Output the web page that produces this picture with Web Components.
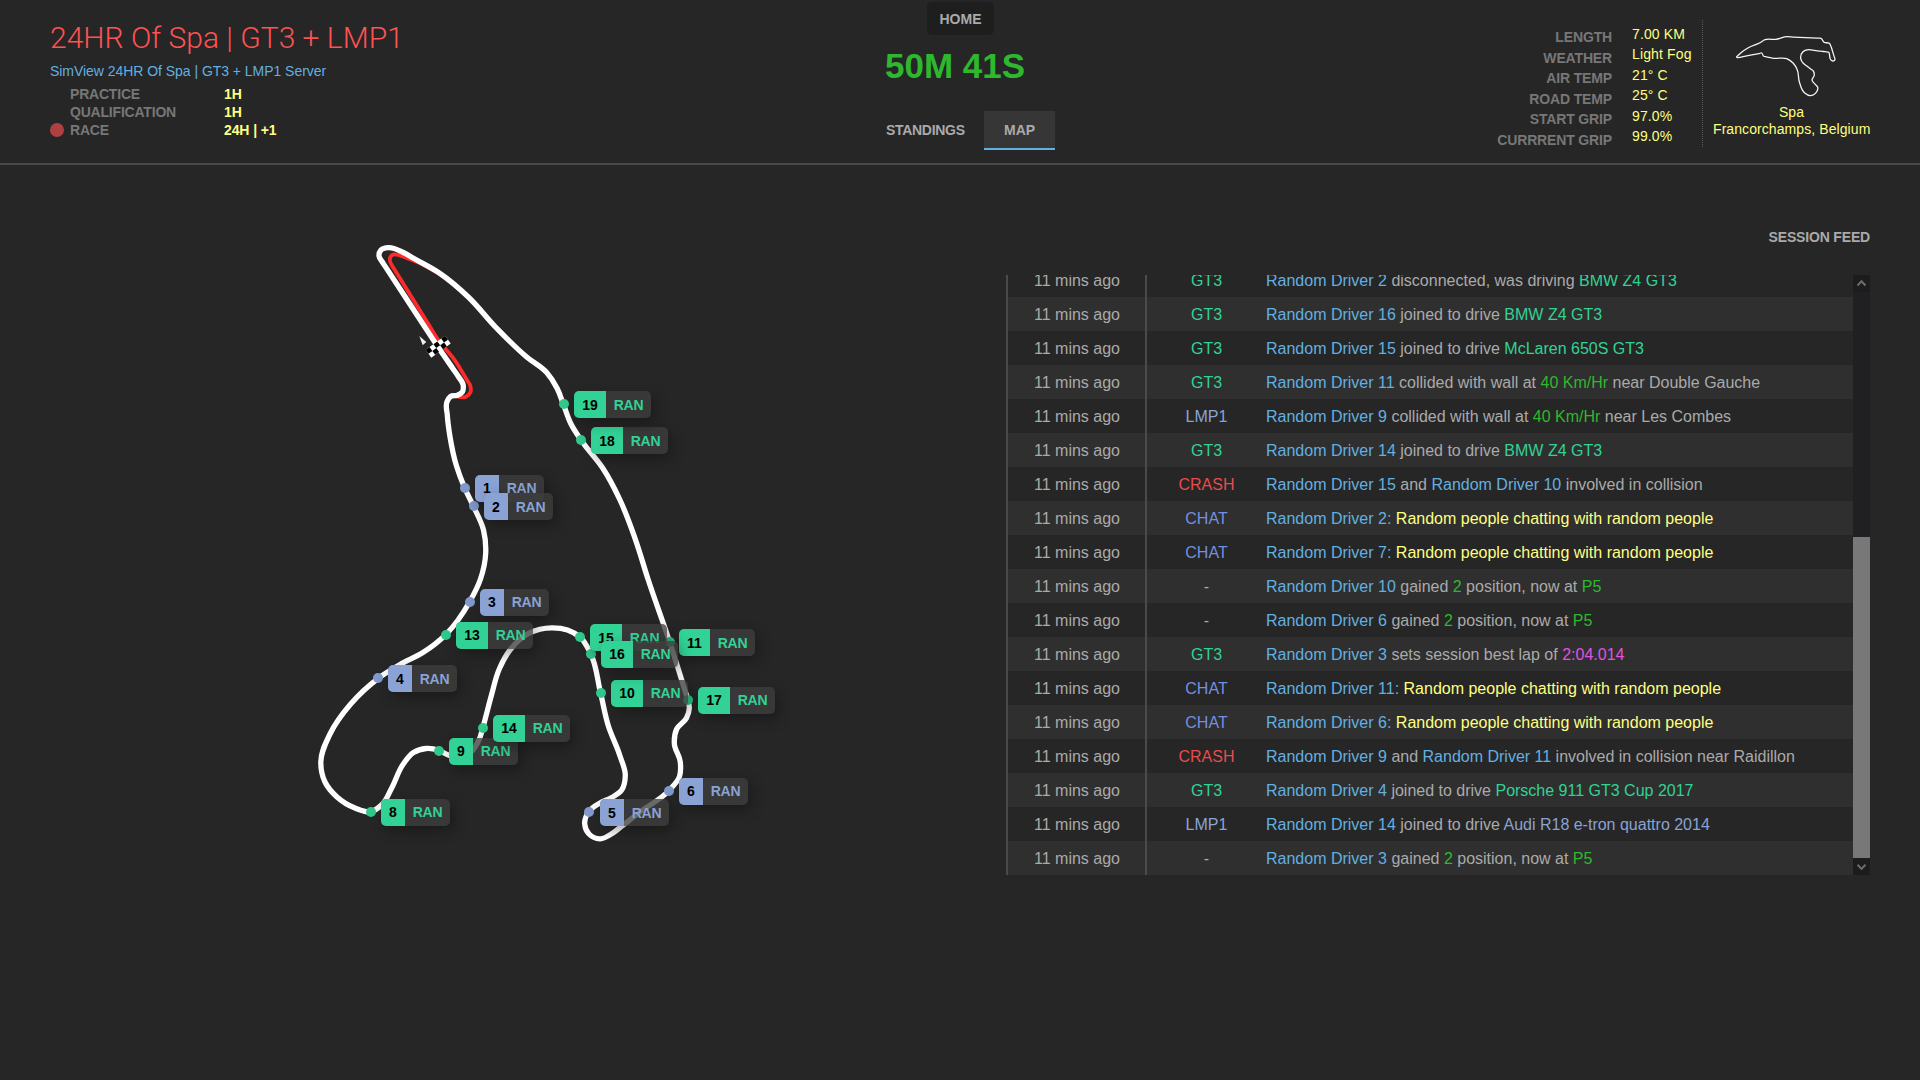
<!DOCTYPE html>
<html lang="en">
<head>
<meta charset="utf-8">
<title>SimView - Live Map</title>
<style>
html,body{margin:0;height:100%;background:#262626;overflow:hidden}
body{font-family:"Liberation Sans",Arial,sans-serif;font-size:14px;color:#aaa}
</style>
</head>
<body>
<sim-app></sim-app>
<script>
const define = (name, markup, setup) => {
  const tpl = document.createElement('template');
  tpl.innerHTML = markup;
  customElements.define(name, class extends HTMLElement {
    connectedCallback() {
      if (this.shadowRoot) return;
      this.attachShadow({mode: 'open'}).append(tpl.content.cloneNode(true));
      if (setup) setup(this, this.shadowRoot);
    }
  });
};

/* Smooth curve through a list of [x,y] points, with chord-length weighted tangents.
   A segment much longer than its neighbour is a straight: it gets an extra point near that end. */
function smooth(raw, closed) {
  const dist = (u, v) => Math.hypot(u[0] - v[0], u[1] - v[1]);
  const picker = q => i => closed ? q[(i + q.length) % q.length] : q[Math.max(0, Math.min(q.length - 1, i))];
  const src = picker(raw), p = [];
  raw.forEach((b, i) => {
    p.push(b);
    if (!closed && i === raw.length - 1) return;
    const c = src(i + 1), l = dist(b, c), la = dist(src(i - 1), b), lb = dist(c, src(i + 2));
    const mix = t => [+(b[0] + (c[0] - b[0]) * t).toFixed(2), +(b[1] + (c[1] - b[1]) * t).toFixed(2)];
    if (la && l > 2.2 * la) p.push(mix(la * .7 / l));
    if (lb && l > 2.2 * lb) p.push(mix(1 - lb * .7 / l));
  });
  const n = p.length, at = picker(p);
  const tangent = i => {
    const a = at(i - 1), b = at(i), c = at(i + 1), la = dist(a, b), lb = dist(b, c);
    return [0, 1].map(k => {
      if (!la) return (c[k] - b[k]) / lb;
      if (!lb) return (b[k] - a[k]) / la;
      return ((b[k] - a[k]) / la * lb + (c[k] - b[k]) / lb * la) / (la + lb);
    });
  };
  const f = v => v.toFixed(2);
  let d = `M${p[0]}`;
  for (let i = 0; i < (closed ? n : n - 1); i++) {
    const b = at(i), c = at(i + 1), l = dist(b, c) * .35, t = tangent(i), u = tangent(closed ? (i + 1) % n : i + 1);
    d += `C${f(b[0] + t[0] * l)},${f(b[1] + t[1] * l)} ${f(c[0] - u[0] * l)},${f(c[1] - u[1] * l)} ${c}`;
  }
  return d + (closed ? 'Z' : '');
}

define('session-row', `<style>
:host{display:flex;align-items:center;height:18px;font-weight:bold;line-height:18px}
i{width:14px;height:14px;border-radius:50%;margin-right:6px}
:host([active]) i{background:#b04040}
span{width:154px;color:#777;letter-spacing:-.2px}
b{color:#ffff80;letter-spacing:-.1px}
</style><i></i><span><slot></slot></span><b><slot name="v"></slot></b>`);

define('session-info', `<style>
:host{display:block;width:600px;padding:17px 0 0 50px;box-sizing:border-box}
h1{margin:0;font:300 30px/42px Roboto,sans-serif;color:#ff5252;white-space:nowrap}
p{margin:3px 0 5px;line-height:18px;color:#62b0e0;letter-spacing:-.04px}
</style>
<h1>24HR Of Spa | GT3 + LMP1</h1>
<p>SimView 24HR Of Spa | GT3 + LMP1 Server</p>
<session-row>PRACTICE<span slot="v">1H</span></session-row>
<session-row>QUALIFICATION<span slot="v">1H</span></session-row>
<session-row active>RACE<span slot="v">24H | +1</span></session-row>`);

define('nav-tab', `<style>
:host{display:block;box-sizing:border-box;height:39px;line-height:38px;font-weight:bold;color:#aaa}
:host([active]){background:#363636;border-bottom:2px solid #62b0e0;padding:0 20px;width:71px}
</style><slot></slot>`);

define('session-clock', `<style>
:host{display:flex;flex-direction:column;width:240px;padding-top:2px;box-sizing:border-box}
.home{width:67px;height:33px;line-height:34px;border-radius:5px;background:#1e1e1e;text-align:center;font-weight:bold;margin-left:41px}
.time{font:bold 35px/40px "Liberation Sans",Arial,sans-serif;color:#2eb82e;margin:11px 0 25px -1px}
nav{display:flex}
nav nav-tab:first-child{width:98px;letter-spacing:-.3px}
</style>
<div class="home">HOME</div><div class="time">50M 41S</div>
<nav><nav-tab>STANDINGS</nav-tab><nav-tab active>MAP</nav-tab></nav>`);

define('track-conditions', `<style>
:host{display:flex;gap:20px;padding-top:20px}
div{display:flex;flex-direction:column;line-height:20.5px}
.k{font-weight:bold;color:#777;text-align:right;padding-top:7px;letter-spacing:-.15px}
.v{color:#ffff80;padding-top:4px;width:70px;line-height:20.4px;white-space:nowrap;letter-spacing:.13px}
</style>
<div class="k"><span>LENGTH</span><span>WEATHER</span><span>AIR TEMP</span><span>ROAD TEMP</span><span>START GRIP</span><span>CURRRENT GRIP</span></div>
<div class="v"><span>7.00 KM</span><span>Light Fog</span><span>21° C</span><span>25° C</span><span>97.0%</span><span>99.0%</span></div>`);

define('track-card', `<style>
:host{display:block;box-sizing:border-box;width:168px;height:127px;margin-top:20px;border-left:1px dotted #5a5a5a;text-align:center;color:#ffff80;line-height:17px;padding-left:10px;white-space:nowrap;letter-spacing:.08px}
svg{display:block;width:157px;height:84px}
</style>
<svg viewBox="1713 20 157 84"><path fill="none" stroke="#f4f4f4" stroke-width="1.3"/></svg>
<div>Spa</div><div>Francorchamps, Belgium</div>`, (host, root) => {
  const pts = [[830,170],[843,158],[865,143],[900,128],[915,119],[948,118],[978,110],[1083,115],[1092,127],[1108,130],[1114,142],[1125,178],[1118,183],[1111,177],[1106,157],[1095,155],[1045,149],[1028,156],[1022,175],[1030,190],[1060,213],[1063,225],[1056,240],[1073,262],[1071,274],[1050,287],[1034,279],[1018,245],[1012,210],[1000,190],[980,176],[940,175],[911,169],[905,159],[840,172],[832,173]];
  root.querySelector('path').setAttribute('d', smooth(pts.map(([x, y]) => [+(x / 3 + 1460).toFixed(1), +(y / 3).toFixed(1)]), true));
});

define('car-dot', `<style>
:host{position:absolute;width:10px;height:10px;margin:-5px 0 0 -5px;border-radius:50%;background:#32c88c}
:host([lmp]){background:#829acb}
</style>`);

define('car-tag', `<style>
:host{position:absolute;display:flex;height:27px;line-height:26px;border-radius:5px;overflow:hidden;font-weight:bold;color:#32d296;background:rgba(61,61,61,.78);box-shadow:3px 5px 14px rgba(0,0,0,.32)}
.n{width:32px;background:#32d296;color:#000;text-align:center}
.c{width:45px;text-align:center;letter-spacing:-.2px}
:host([low]){line-height:28px}
:host([one]) .n{width:24px}
:host([narrow]) .n{width:31px}
:host([lmp]){color:#8aa2d4}
:host([lmp]) .n{background:#8aa2d4}
</style><div class="n"><slot></slot></div><div class="c">RAN</div>`);

define('track-map', `<style>
:host{display:block;position:relative;width:1006px;height:915px}
svg{display:block;width:1006px;height:915px}
</style>
<svg viewBox="0 165 1006 915" fill="none">
<path id="pit" stroke="#ff2a2a" stroke-width="3.8"/>
<path id="lap" stroke="#fff" stroke-width="5.3" stroke-linejoin="round"/>
<path d="M419.3 336L426.3 342L422.7 345.3Z" fill="#eee"/>
<g transform="translate(438.2 346.7) rotate(-36)"><rect x="-12" y="-4.8" width="24" height="9.6" fill="#fff"/>
<path fill="#000" d="M-12-4.8h4.8v4.8h-4.8zM-2.4-4.8h4.8v4.8h-4.8zM7.2-4.8h4.8v4.8h-4.8zM-7.2 0h4.8v4.8h-4.8zM2.4 0h4.8v4.8h-4.8z"/></g>
</svg>`, (host, root) => {
  const lap = [[388,247.7],[380.8,250.2],[379,256],[382,261.5],[436.7,345],[458,376],[463.3,386],[462.3,392],[457.5,395.2],[450.5,396.5],[446.9,402],[447.3,415],[450,436.7],[456.2,465],[464.7,488],[473.8,507],[483.5,530],[485.7,553],[480.5,579],[469.7,601.7],[446,634.3],[423.3,652.3],[400,664.5],[378.3,678.3],[350.7,704],[330,734],[320.8,762],[325,782],[336.7,796.7],[355,808],[370.7,811.7],[382,804.5],[391.7,788],[403.3,764],[413.5,752.5],[426,748.5],[438.7,750.3],[448.3,755],[460,757.5],[471,752],[478.5,741],[483,727.3],[491.5,695],[499.5,668.5],[510,650],[529,633.2],[551.7,627.8],[567.5,630],[580.5,637.5],[590.5,653.3],[600.5,692.7],[608.3,725.7],[620,756],[625.3,776],[621.7,790],[611.7,797.5],[600,803],[589.3,811],[584.7,824],[589,834],[600,838.8],[613.3,832.7],[640,812],[668.7,790.7],[679.5,776.5],[680.3,762],[674.3,743.3],[676.7,729],[686.5,718],[689.3,708],[688,700],[670,643],[648.3,580],[635,538.3],[620,500],[603,468.5],[581,440],[571,424],[563.3,404],[557.2,388.5],[546.7,372.5],[526.7,357],[496,327.5],[468.3,297],[440,273.5],[403.3,252.5]];
  const pit = [[440,274],[417,262],[398,254.8],[391.8,255.3],[389.8,260],[392,265.5],[438.3,340],[455.3,361],[470,385],[470.5,392],[466,396.8],[458,397]];
  root.querySelector('#lap').setAttribute('d', smooth(lap, true));
  root.querySelector('#pit').setAttribute('d', smooth(pit, false));
  const cars = [[1,464.7,487.7],[2,473.5,506],[3,469.7,601.7],[4,378,678.3],[5,589.3,812],[6,668.7,790.7],[8,370.7,811.7],[9,438.7,750.7],[10,600.7,692.8],[11,670,642],[13,446,634.7],[14,482.9,727.5],[15,580,637],[16,591,654],[17,688,700],[18,581,440],[19,563.5,404]];
  const add = (tag, n, x, y) => {
    const e = document.createElement(tag);
    e.style.left = x + 'px'; e.style.top = y - 165 + 'px';
    if (n < 7) e.setAttribute('lmp', '');
    if (n < 10) e.setAttribute('one', '');
    if (n === 11) e.setAttribute('narrow', '');
    if ([2, 4, 5, 11, 15, 18, 19].includes(n)) e.setAttribute('low', '');
    root.append(e);
    return e;
  };
  cars.forEach(([n, x, y]) => add('car-dot', n, x, y));
  cars.forEach(([n, x, y]) => add('car-tag', n, n === 11 ? 679 : Math.round(x + 10.3), Math.round(y - 13)).append(n));
});

define('feed-row', `<style>
:host{display:flex;flex:none;height:34px;line-height:36px;font-size:16px;color:#aaa}
:host([alt]){background:#2f2f2f}
.t{width:136px;padding-left:1px;border-right:2px solid #4a4a4a;text-align:center}
.k{width:119px;text-align:center}
.d{white-space:pre}
.drv{color:#62b0e0}.gt{color:#32d296}.lmp{color:#8aa2d4}.red{color:#e64c4c}.chat{color:#7390e0}
.spd{color:#2eb82e}.msg{color:#ffff80}.best{color:#e052e0}.none{color:#aaa}
</style><div class="t">11 mins ago</div><div class="k"></div><div class="d"></div>`, (host, root) => {
  const span = (cls, text) => { const s = document.createElement('span'); s.className = cls; s.textContent = text; return s; };
  const {kind, parts} = host.data;
  const cls = {GT3: 'gt', LMP1: 'lmp', CRASH: 'red', CHAT: 'chat', '-': 'none'}[kind];
  root.querySelector('.k').append(span(cls, kind));
  root.querySelector('.d').append(...parts.map(p => Array.isArray(p) ? span(...p) : p));
});

define('feed-scrollbar', `<style>
:host{display:flex;flex-direction:column;width:17px;background:#202022}
.b{height:17px;background:#1c1c1c}
svg{display:block}
.gap{height:245px}
.thumb{height:321px;background:#787878}
</style>
<div class="b"><svg width="17" height="17"><path d="M4.5 10.5L8.5 6.3L12.5 10.5" fill="none" stroke="#6c6c6c" stroke-width="2"/></svg></div>
<div class="gap"></div><div class="thumb"></div>
<div class="b"><svg width="17" height="17"><path d="M4.5 6.7L8.5 10.9L12.5 6.7" fill="none" stroke="#6c6c6c" stroke-width="2"/></svg></div>`);

define('session-feed', `<style>
:host{display:block;width:864px;padding-top:64px}
h2{margin:0 0 29px;font-size:14px;line-height:17px;text-align:right;color:#aaa;letter-spacing:-.17px}
.box{display:flex;height:600px}
.rows{display:flex;flex-direction:column;justify-content:flex-end;flex:1;overflow:hidden;border-left:2px solid #4a4a4a}
</style><h2>SESSION FEED</h2><div class="box"><div class="rows"></div><feed-scrollbar></feed-scrollbar></div>`, (host, root) => {
  const D = n => ['drv', 'Random Driver ' + n];
  const joined = (kind, n, cls, car) => ({kind, parts: [D(n), ' joined to drive ', [cls, car]]});
  const wall = (kind, n, where) => ({kind, parts: [D(n), ' collided with wall at ', ['spd', '40 Km/Hr'], ' near ' + where]});
  const crash = (a, b, tail) => ({kind: 'CRASH', parts: [D(a), ' and ', D(b), ' involved in collision' + tail]});
  const chat = n => ({kind: 'CHAT', parts: [D(n), ['drv', ': '], ['msg', 'Random people chatting with random people']]});
  const gain = n => ({kind: '-', parts: [D(n), ' gained ', ['spd', '2'], ' position, now at ', ['spd', 'P5']]});
  [
    {kind: 'GT3', parts: [D(2), ' disconnected, was driving ', ['gt', 'BMW Z4 GT3']]},
    joined('GT3', 16, 'gt', 'BMW Z4 GT3'),
    joined('GT3', 15, 'gt', 'McLaren 650S GT3'),
    wall('GT3', 11, 'Double Gauche'),
    wall('LMP1', 9, 'Les Combes'),
    joined('GT3', 14, 'gt', 'BMW Z4 GT3'),
    crash(15, 10, ''),
    chat(2), chat(7), gain(10), gain(6),
    {kind: 'GT3', parts: [D(3), ' sets session best lap of ', ['best', '2:04.014']]},
    chat(11), chat(6),
    crash(9, 11, ' near Raidillon'),
    joined('GT3', 4, 'gt', 'Porsche 911 GT3 Cup 2017'),
    joined('LMP1', 14, 'lmp', 'Audi R18 e-tron quattro 2014'),
    gain(3)
  ].forEach((data, i) => {
    const row = document.createElement('feed-row');
    row.data = data;
    row.toggleAttribute('alt', i % 2 === 1);
    root.querySelector('.rows').append(row);
  });
});

define('sim-app', `<style>
:host{display:block;width:1920px;height:1080px;overflow:hidden}
header{display:flex;box-sizing:border-box;height:165px;border-bottom:2px solid #4a4a4a}
session-clock{margin-left:286px}
track-conditions{margin-left:auto}
track-card{margin-right:50px}
main{display:flex}
</style>
<header><session-info></session-info><session-clock></session-clock><track-conditions></track-conditions><track-card></track-card></header>
<main><track-map></track-map><session-feed></session-feed></main>`);
</script>
</body>
</html>
